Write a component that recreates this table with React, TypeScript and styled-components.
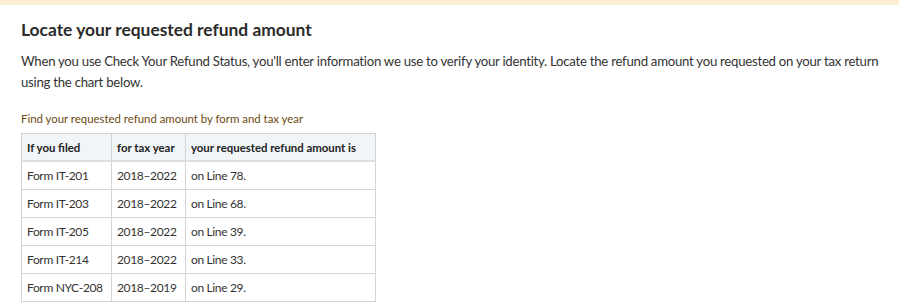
import React from "react";
import styled, { createGlobalStyle } from "styled-components";

const Global = createGlobalStyle`
  html, body { margin: 0; padding: 0; background: #fff; }
  body { font-family: Lato, "Open Sans", sans-serif; color: #333; }
`;

const Page = styled.div`
  width: 899px;
  height: 307px;
  overflow: hidden;
  display: flex;
  flex-direction: column;
`;

const TopBand = styled.div`
  height: 5px;
  background: #fdefd3;
  flex-shrink: 0;
`;

const Content = styled.div`
  padding: 13px 0 0 21px;
  display: flex;
  flex-direction: column;
`;

const Heading = styled.h2`
  margin: 0;
  font-size: 17.4px;
  font-weight: 700;
  color: #2b2b2b;
  line-height: 24px;
`;

const Para = styled.p`
  margin: 9px 0 0;
  font-size: 13.2px;
  letter-spacing: -0.26px;
  line-height: 21px;
  color: #333;
  width: 870px;
`;

const Caption = styled.div`
  margin-top: 18px;
  font-size: 11.4px;
  line-height: 16px;
  color: #6b4a12;
`;

const Table = styled.table`
  margin-top: 6px;
  border-collapse: collapse;
  table-layout: fixed;
  width: 354px;
  color: #333;
`;

const Th = styled.th`
  text-align: left;
  font-weight: 700;
  font-size: 11.4px;
  background: #f1f5f8;
  border: 1px solid #d2d4d6;
  border-bottom: 2px solid #dcdee0;
  height: 26px;
  padding: 0 5px;
  white-space: nowrap;
  color: #222;
`;

const Td = styled.td`
  border: 1px solid #d2d4d6;
  height: 27px;
  padding: 0 5px;
  font-size: 12px;
  letter-spacing: -0.35px;
  white-space: nowrap;
`;

const rows = [
  ["Form IT-201", "2018–2022", "on Line 78."],
  ["Form IT-203", "2018–2022", "on Line 68."],
  ["Form IT-205", "2018–2022", "on Line 39."],
  ["Form IT-214", "2018–2022", "on Line 33."],
  ["Form NYC-208", "2018–2019", "on Line 29."],
];

export default function App() {
  return (
    <Page>
      <Global />
      <TopBand />
      <Content>
        <Heading>Locate your requested refund amount</Heading>
        <Para>
          When you use Check Your Refund Status, you'll enter information we use to verify your identity. Locate the refund amount you requested on your tax return using the chart below.
        </Para>
        <Caption>Find your requested refund amount by form and tax year</Caption>
        <Table>
          <colgroup>
            <col style={{ width: 90 }} />
            <col style={{ width: 74 }} />
            <col style={{ width: 190 }} />
          </colgroup>
          <thead>
            <tr>
              <Th>If you filed</Th>
              <Th>for tax year</Th>
              <Th>your requested refund amount is</Th>
            </tr>
          </thead>
          <tbody>
            {rows.map((r) => (
              <tr key={r[0]}>
                {r.map((c, i) => (
                  <Td key={i}>{c}</Td>
                ))}
              </tr>
            ))}
          </tbody>
        </Table>
      </Content>
    </Page>
  );
}
